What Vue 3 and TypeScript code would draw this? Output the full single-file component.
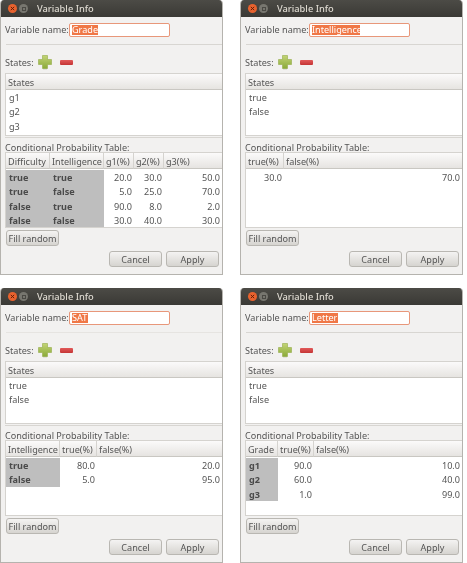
<script setup lang="ts">
interface Win {
  name: string
  selWidth: number
  states: string[]
  columns: string[]
  grid: string
  keyCount: number
  rows: string[][]
}

const windows: Win[] = [
  {
    name: 'Grade',
    selWidth: 26,
    states: ['g1', 'g2', 'g3'],
    columns: ['Difficulty', 'Intelligence', 'g1(%)', 'g2(%)', 'g3(%)'],
    grid: '44px 54px 30px 30px 1fr',
    keyCount: 2,
    rows: [
      ['true', 'true', '20.0', '30.0', '50.0'],
      ['true', 'false', '5.0', '25.0', '70.0'],
      ['false', 'true', '90.0', '8.0', '2.0'],
      ['false', 'false', '30.0', '40.0', '30.0'],
    ],
  },
  {
    name: 'Intelligence',
    selWidth: 48,
    states: ['true', 'false'],
    columns: ['true(%)', 'false(%)'],
    grid: '38px 1fr',
    keyCount: 0,
    rows: [['30.0', '70.0']],
  },
  {
    name: 'SAT',
    selWidth: 16,
    states: ['true', 'false'],
    columns: ['Intelligence', 'true(%)', 'false(%)'],
    grid: '54px 37px 1fr',
    keyCount: 1,
    rows: [
      ['true', '80.0', '20.0'],
      ['false', '5.0', '95.0'],
    ],
  },
  {
    name: 'Letter',
    selWidth: 26,
    states: ['true', 'false'],
    columns: ['Grade', 'true(%)', 'false(%)'],
    grid: '32px 36px 1fr',
    keyCount: 1,
    rows: [
      ['g1', '90.0', '10.0'],
      ['g2', '60.0', '40.0'],
      ['g3', '1.0', '99.0'],
    ],
  },
]
</script>

<template>
  <div class="desktop">
    <section v-for="(w, i) in windows" :key="w.name" class="window">
      <header class="titlebar">
        <span class="dot close"><svg viewBox="0 0 6 6" width="5" height="5"><path d="M1 1 5 5M5 1 1 5" stroke="#5a1a06" stroke-width="1.1" /></svg></span>
        <span class="dot min"><span class="min-mark"></span></span>
        <span class="title">Variable Info</span>
      </header>
      <div class="body">
        <div class="name-row">
          <label class="label name-label">Variable name:</label>
          <div class="input">
            <span class="selection" :style="{ width: w.selWidth + 'px' }">{{ w.name }}</span>
          </div>
        </div>
        <div class="sep" :class="{ faint: i === 2 }"></div>
        <div class="states-row">
          <span class="label states-label">States:</span>
          <svg class="plus" viewBox="0 0 14 15" width="14" height="15">
            <defs>
              <linearGradient :id="'g' + i" x1="0" y1="0" x2="0" y2="1">
                <stop offset="0" stop-color="#c3d476" />
                <stop offset="1" stop-color="#8aaa38" />
              </linearGradient>
            </defs>
            <path d="M5 13h4v1.5H5z" fill="#cfcfc8" />
            <path d="M4.5 .5h5v4h4v5h-4v4h-5v-4h-4v-5h4z" :fill="'url(#g' + i + ')'" stroke="#93ab48" stroke-width=".6" />
          </svg>
          <span class="minus"></span>
        </div>
        <div class="list">
          <div class="head-cell list-head">States</div>
          <div v-for="s in w.states" :key="s" class="list-row">{{ s }}</div>
        </div>
        <div class="sep lower"></div>
        <div class="cpt-label label">Conditional Probability Table:</div>
        <div class="table">
          <div class="thead" :style="{ gridTemplateColumns: w.grid }">
            <div v-for="c in w.columns" :key="c" class="head-cell">{{ c }}</div>
          </div>
          <div v-for="(r, ri) in w.rows" :key="ri" class="trow" :style="{ gridTemplateColumns: w.grid }">
            <div
              v-for="(v, ci) in r"
              :key="ci"
              class="cell"
              :class="ci < w.keyCount ? 'key' : 'num'"
            >{{ v }}</div>
          </div>
        </div>
        <button class="btn fill" type="button">Fill random</button>
        <div class="actions">
          <button class="btn action" type="button">Cancel</button>
          <button class="btn action" type="button">Apply</button>
        </div>
      </div>
    </section>
  </div>
</template>

<style>
html, body { margin: 0; background: #fff; }
</style>

<style scoped>
.desktop {
  display: grid;
  grid-template-columns: 222px 222px;
  grid-auto-rows: 275px;
  column-gap: 18px;
  row-gap: 13px;
  width: 467px;
  height: 563px;
  font-family: "Noto Sans", sans-serif;
  font-size: 9.1px;
  color: #555;
  filter: blur(0.35px);
}
.window {
  display: flex;
  flex-direction: column;
  background: #f2f1f0;
  border: 1px solid #b5b3ae;
  border-top: 0;
  box-sizing: border-box;
  width: 223px;
  border-radius: 4px 4px 0 0;
  overflow: hidden;
}
.titlebar {
  display: flex;
  align-items: center;
  height: 17px;
  flex: none;
  padding-left: 7px;
  background: linear-gradient(#4c4b46, #3a3935);
}
.dot {
  width: 9px;
  height: 9px;
  border-radius: 50%;
  display: flex;
  align-items: center;
  justify-content: center;
  margin-right: 2px;
}
.close { background: #e8622e; }
.min { background: #77766f; }
.min-mark { width: 4px; height: 4px; border: 1px solid #4a4944; box-sizing: border-box; }
.title {
  margin-left: 7px;
  color: #dfdbd2;
  font-size: 9.3px;
  font-weight: 500;
}
.body {
  display: flex;
  flex-direction: column;
  flex: 1;
  padding-left: 4px;
}
.label { white-space: nowrap; line-height: 12px; }
.name-row {
  display: flex;
  align-items: center;
  margin-top: 6px;
  height: 14px;
}
.name-label { flex: 0 0 64px; }
.input {
  width: 101px;
  height: 14px;
  box-sizing: border-box;
  border: 1px solid #e8977a;
  border-radius: 2px;
  background: #fff;
  padding: 1px 2px;
  line-height: 10px;
}
.selection {
  display: inline-block;
  height: 10px;
  background: #f07746;
  color: #fff;
  white-space: nowrap;
}
.sep {
  height: 1px;
  background: #d8d6d2;
  margin: 7px 0 0 1px;
  width: 216px;
}
.sep.faint { background: #e6e4e1; }
.sep.lower { margin: 1px 0 0; width: 218px; }
.states-row {
  display: flex;
  align-items: center;
  height: 15px;
  margin-top: 10px;
}
.states-label { flex: 0 0 33px; }
.plus { flex: none; }
.minus {
  width: 13px;
  height: 5px;
  margin-left: 8px;
  border-radius: 1px;
  background: linear-gradient(#e25a5a, #c43434);
}
.list {
  height: 63px;
  margin-top: 3px;
  box-sizing: border-box;
  border: 1px solid #d5d3cf;
  background: #fff;
  width: 218px;
}
.head-cell {
  height: 16px;
  line-height: 15px;
  box-sizing: border-box;
  padding: 1px 0 0 2px;
  border-right: 1px solid #d5d3cf;
  border-bottom: 1px solid #c9c7c2;
  background: linear-gradient(#fbfafa, #e6e4e1);
  white-space: nowrap;
  overflow: hidden;
}
.list-head { border-right: 0; }
.list-row { height: 14.3px; line-height: 14.3px; padding-left: 3px; }
.list-head + .list-row { margin-top: 1px; }
.cpt-label { margin-top: 4px; height: 10px; line-height: 11px; }
.table {
  height: 76px;
  box-sizing: border-box;
  border: 1px solid #d5d3cf;
  background: #fff;
  width: 218px;
}
.thead, .trow { display: grid; }
.thead > .head-cell:last-child { border-right: 0; }
.thead { margin-bottom: 1px; }
.cell {
  height: 14.3px;
  line-height: 14.3px;
  white-space: nowrap;
  box-sizing: border-box;
  padding-top: 1px;
}
.key {
  background: #bebebe;
  font-weight: 700;
  padding-left: 3px;
  color: #4a4a4a;
}
.num { text-align: right; padding-right: 2px; }
.btn {
  font: inherit;
  color: inherit;
  box-sizing: border-box;
  border: 1px solid #b9b7b2;
  border-radius: 3px;
  background: linear-gradient(#f4f3f2, #d6d4d0);
  padding: 0;
}
.fill {
  width: 53px;
  height: 16px;
  margin: 2px 0 0 1px;
  line-height: 13px;
}
.actions {
  display: flex;
  gap: 4px;
  margin: 5px 0 0 104px;
}
.action { width: 53px; height: 16px; line-height: 13px; }
</style>
